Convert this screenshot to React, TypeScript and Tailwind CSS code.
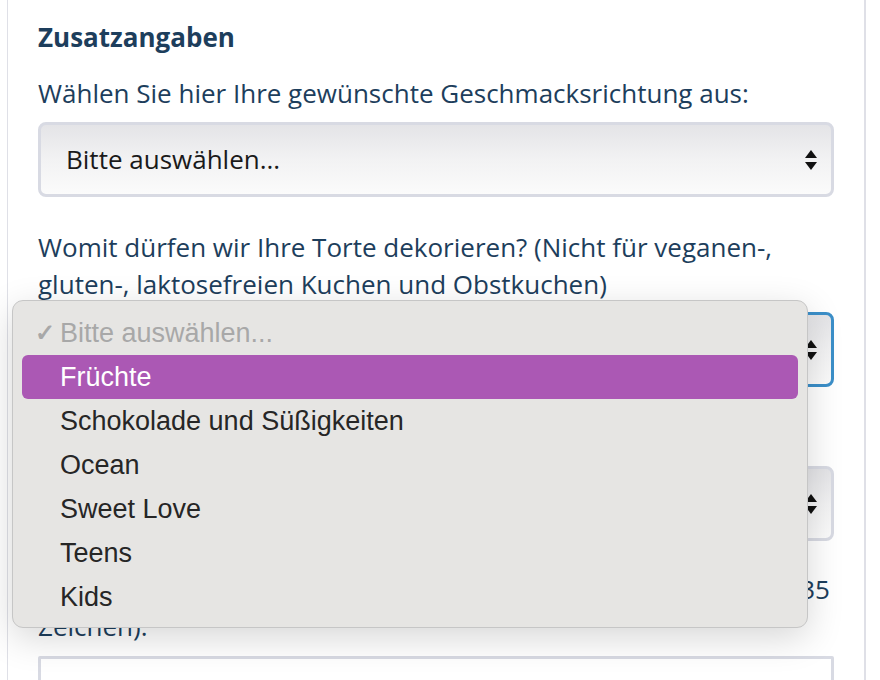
import React from 'react';

const options = ['Früchte', 'Schokolade und Süßigkeiten', 'Ocean', 'Sweet Love', 'Teens', 'Kids'];

function Arrows() {
  return (
    <svg width="12" height="20" viewBox="0 0 12 20" className="shrink-0">
      <path d="M6 0 L12 8 L0 8 Z" fill="#111" />
      <path d="M0 12 L12 12 L6 20 Z" fill="#111" />
    </svg>
  );
}

function FakeSelect({ focused = false, label = '' }: { focused?: boolean; label?: string }) {
  return (
    <div
      className={
        focused
          ? 'h-[75px] w-full rounded-[8px] border-[3px] border-[#3b8fc9] bg-gradient-to-b from-[#e4e4e7] via-[#f2f2f3] to-[#fbfbfb] flex items-center justify-between pl-[25px] pr-[14px]'
          : 'h-[75px] w-full rounded-[8px] border-[3px] border-[#d8dae3] bg-gradient-to-b from-[#e4e4e7] via-[#f2f2f3] to-[#fbfbfb] flex items-center justify-between pl-[25px] pr-[14px]'
      }
    >
      <span className="text-[26px] text-[#1a1a1a]">{label}</span>
      <Arrows />
    </div>
  );
}

export default function App() {
  return (
    <div className="relative w-[880px] h-[680px] overflow-hidden bg-white font-['Open_Sans',sans-serif] text-[#1d3e5c]">
      <div className="ml-[7px] w-[859px] h-full border-l border-r-2 border-[#dfe0e7] pl-[30px] pr-[30px] pt-[19px]">
        <h2 className="text-[26px] leading-[37px] font-bold mb-[19px]">Zusatzangaben</h2>

        <p className="text-[26px] leading-[37px] mb-[10px]">Wählen Sie hier Ihre gewünschte Geschmacksrichtung aus:</p>
        <FakeSelect label="Bitte auswählen..." />

        <p className="text-[26px] leading-[37px] mt-[32px] mb-[9px]">
          Womit dürfen wir Ihre Torte dekorieren? (Nicht für veganen-, gluten-, laktosefreien Kuchen und Obstkuchen)
        </p>
        <FakeSelect focused label="Bitte auswählen..." />

        <p className="text-[26px] leading-[37px] mt-[32px] mb-[10px]">Wählen Sie die Größe Ihrer Torte aus:</p>
        <FakeSelect label="Bitte auswählen..." />

        <p className="text-[26px] leading-[37px] mt-[30px] mb-[11px] pr-[4px]">
          <span className="block text-justify [text-align-last:justify]">Welche Aufschrift wünschen Sie sich auf der Torte? (maximal 35</span>
          Zeichen).
        </p>
        <div className="h-[75px] w-full rounded-[2px] border-[3px] border-[#d8dae3] bg-white" />
      </div>

      {/* open native dropdown */}
      <div className="absolute left-[12px] top-[300px] w-[796px] h-[328px] rounded-[11px] border border-[#c6c6c6] bg-[#e6e5e3] px-[9px] py-[10px] shadow-[0_10px_36px_rgba(0,0,0,0.16)] font-['Liberation_Sans',Arial,sans-serif]">
        <div className="relative h-[44px] flex items-center pl-[38px] text-[27px] text-[#a8a8a8]">
          <span className="absolute left-[13px] text-[24px] font-bold">✓</span>
          Bitte auswählen...
        </div>
        {options.map((o, i) => (
          <div
            key={o}
            className={
              i === 0
                ? 'h-[44px] flex items-center pl-[38px] text-[27px] text-white bg-[#ab58b4] rounded-[6px]'
                : 'h-[44px] flex items-center pl-[38px] text-[27px] text-[#262626]'
            }
          >
            {o}
          </div>
        ))}
      </div>
    </div>
  );
}
